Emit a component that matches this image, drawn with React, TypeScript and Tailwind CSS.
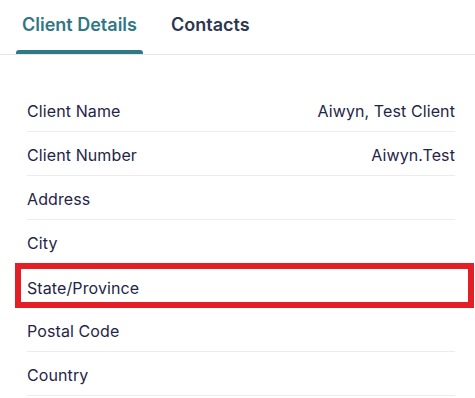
import React from 'react';

// Client details panel with tab strip and label/value rows

const rows: { label: string; value?: string; highlight?: boolean }[] = [
  { label: 'Client Name', value: 'Aiwyn, Test Client' },
  { label: 'Client Number', value: 'Aiwyn.Test' },
  { label: 'Address' },
  { label: 'City' },
  { label: 'State/Province', highlight: true },
  { label: 'Postal Code' },
  { label: 'Country' },
];

export default function App() {
  return (
    <div
      className="w-[475px] h-[398px] overflow-hidden bg-white text-[#1f2547]"
      style={{ fontFamily: 'Inter, "Noto Sans", sans-serif' }}
    >
      <div className="flex h-[55px] items-end gap-[22px] border-b border-[#e6e6e6] pl-4">
        <button className="relative flex h-full items-center px-1.5 pb-[6px] text-[18px] font-semibold text-[#2f7884]">
          Client Details
          <span className="absolute bottom-0 left-0 right-0 h-1 rounded-t-[3px] bg-[#2f7884]" />
        </button>
        <button className="flex h-full items-center px-1.5 pb-[6px] text-[18px] font-semibold text-[#2c3650]">
          Contacts
        </button>
      </div>

      <div className="mt-[33px] px-[27px] w-[482px]">
        {rows.map((row) => (
          <div
            key={row.label}
            className={`relative flex h-[44px] items-center justify-between pt-[3px] text-[16px] tracking-[0.1px] ${
              row.highlight ? '' : 'border-b border-[#ececec]'
            }`}
          >
            <span>{row.label}</span>
            {row.value && <span>{row.value}</span>}
            {row.highlight && (
              <div className="pointer-events-none absolute -top-px bottom-0 -left-3 -right-[19px] border-[6px] border-[#e31e24]" />
            )}
          </div>
        ))}
      </div>
    </div>
  );
}
